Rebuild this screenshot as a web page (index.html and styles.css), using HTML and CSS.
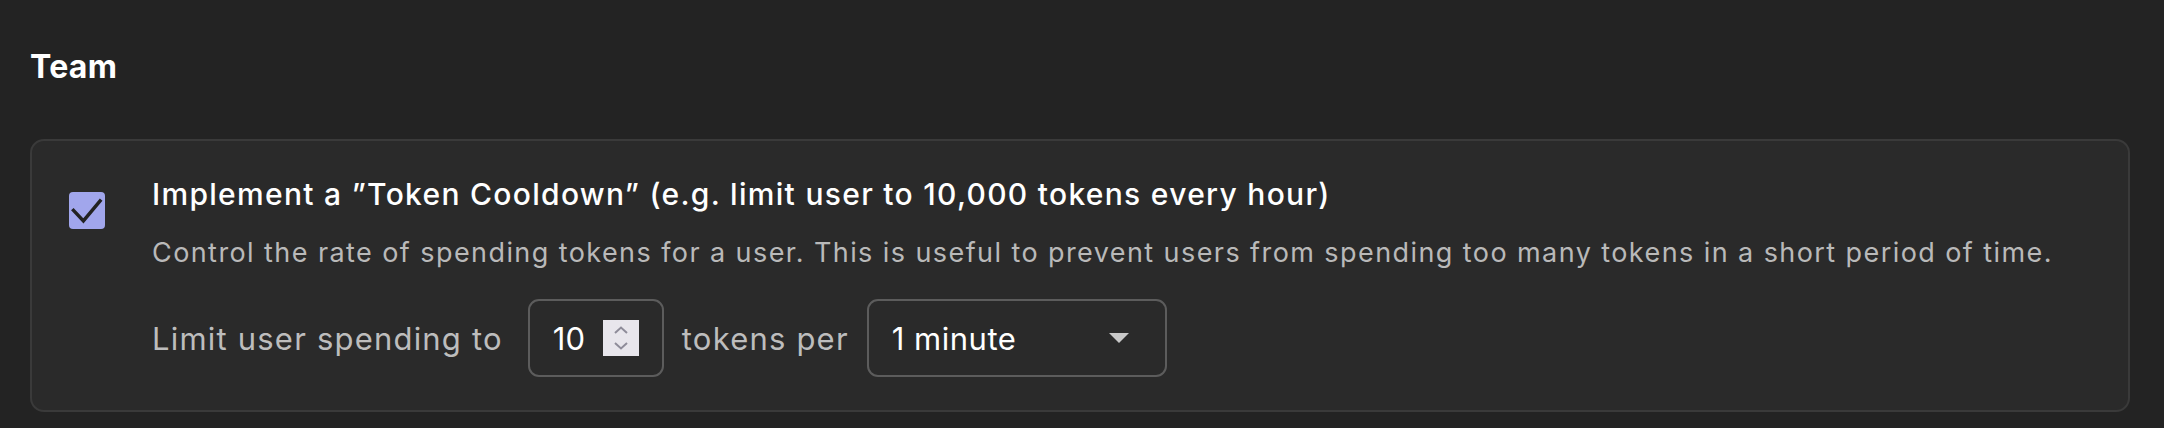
FILE: index.html
```html
<!DOCTYPE html>
<html lang="en">
<head>
<meta charset="utf-8">
<title>Team</title>
<link rel="stylesheet" href="styles.css">
</head>
<body>
  <section class="section">
    <h2 class="section-title">Team</h2>
    <div class="card">
      <div class="checkbox" role="checkbox" aria-checked="true">
        <svg viewBox="0 0 24 24" width="36" height="36" aria-hidden="true">
          <path d="M3 11.6 L9.6 18.6 L20.7 5.3" fill="none" stroke="#222" stroke-width="2.3" stroke-linecap="square" stroke-linejoin="miter"/>
        </svg>
      </div>
      <div class="content">
        <div class="option-title">Implement a ”Token Cooldown” (e.g. limit user to 10,000 tokens every hour)</div>
        <div class="option-desc">Control the rate of spending tokens for a user. This is useful to prevent users from spending too many tokens in a short period of time.</div>
        <div class="limit-row">
          <span class="limit-label limit-label-first">Limit user spending to</span>
          <div class="number-field">
            <span class="number-value">10</span>
            <span class="spinner">
              <svg viewBox="0 0 36 36" width="36" height="36" aria-hidden="true">
                <path d="M12 13 L18 7.5 L24 13" fill="none" stroke="#8e8c99" stroke-width="2"/>
                <path d="M12 23 L18 28.5 L24 23" fill="none" stroke="#8e8c99" stroke-width="2"/>
              </svg>
            </span>
          </div>
          <span class="limit-label">tokens per</span>
          <div class="select">
            <span class="select-value">1 minute</span>
            <span class="caret"></span>
          </div>
        </div>
      </div>
    </div>
  </section>
</body>
</html>
```

FILE: styles.css
```css
html, body {
  margin: 0;
  padding: 0;
  background: #232323;
}

body {
  font-family: Inter, "Noto Sans", sans-serif;
  color: #ffffff;
  padding: 0 34px 0 30px;
}

.section-title {
  margin: 0;
  padding-top: 48px;
  font-size: 32px;
  line-height: 1.2;
  font-weight: 700;
  color: #ffffff;
  letter-spacing: 0.3px;
}

.card {
  margin-top: 53px;
  background: #2a2a2a;
  border: 2px solid #3a3a3a;
  border-radius: 14px;
  padding: 33px 40px 33px 37px;
  display: flex;
  align-items: flex-start;
  gap: 47px;
}

.checkbox {
  flex: none;
  width: 36px;
  height: 37px;
  margin-top: 18px;
  background: #a1a6ec;
  border-radius: 4px;
  display: flex;
  align-items: center;
  justify-content: center;
}

.checkbox svg {
  display: block;
}

.content {
  display: flex;
  flex-direction: column;
  min-width: 0;
}

.option-title {
  font-size: 30px;
  line-height: 40px;
  font-weight: 500;
  color: #ffffff;
  letter-spacing: 1.3px;
}

.option-desc {
  margin-top: 19px;
  font-size: 27px;
  line-height: 40px;
  color: #b9b9b9;
  letter-spacing: 1.42px;
}

.limit-row {
  margin-top: 26px;
  display: flex;
  align-items: center;
  gap: 18px;
}

.limit-label {
  font-size: 31px;
  color: #bdbdbd;
  letter-spacing: 1.2px;
}

.limit-label-first {
  margin-right: 7px;
}

.number-field {
  width: 136px;
  height: 78px;
  box-sizing: border-box;
  border: 2px solid #5c5c5c;
  border-radius: 11px;
  display: flex;
  align-items: center;
  padding-left: 23px;
  gap: 18px;
}

.number-value {
  font-size: 31px;
  color: #ffffff;
}

.spinner {
  width: 36px;
  height: 36px;
  background: #e8e6ec;
  display: block;
}

.spinner svg {
  display: block;
}

.select {
  width: 300px;
  height: 78px;
  box-sizing: border-box;
  border: 2px solid #5c5c5c;
  border-radius: 11px;
  display: flex;
  align-items: center;
  justify-content: space-between;
  padding: 0 36px 0 23px;
}

.select-value {
  font-size: 31px;
  color: #ffffff;
  letter-spacing: 0.5px;
}

.caret {
  width: 0;
  height: 0;
  border-left: 10px solid transparent;
  border-right: 10px solid transparent;
  border-top: 10px solid #c8c8c8;
}
```
